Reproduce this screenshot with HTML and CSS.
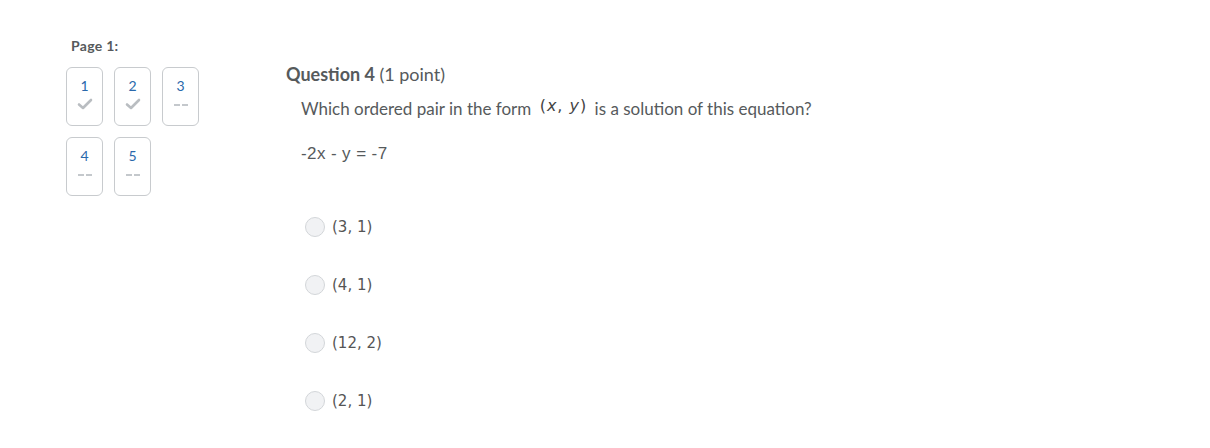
FILE: index.html
```html
<!DOCTYPE html>
<html>
<head>
<meta charset="utf-8">
<link rel="stylesheet" href="styles.css">
</head>
<body>
<div class="page">
  <aside class="nav">
    <div class="nav-title">Page 1:</div>
    <div class="grid">
      <div class="q"><span class="num">1</span><svg class="check" width="16" height="12" viewBox="0 0 16 12"><path d="M2 6.5 L6 10 L14 2" fill="none" stroke="#b9bdc1" stroke-width="2.6" stroke-linecap="round" stroke-linejoin="round"/></svg></div>
      <div class="q"><span class="num">2</span><svg class="check" width="16" height="12" viewBox="0 0 16 12"><path d="M2 6.5 L6 10 L14 2" fill="none" stroke="#b9bdc1" stroke-width="2.6" stroke-linecap="round" stroke-linejoin="round"/></svg></div>
      <div class="q"><span class="num">3</span><span class="dash"><i></i><i></i></span></div>
      <div class="q"><span class="num">4</span><span class="dash"><i></i><i></i></span></div>
      <div class="q"><span class="num">5</span><span class="dash"><i></i><i></i></span></div>
    </div>
  </aside>
  <main class="question">
    <h2 class="qtitle">Question 4 <span class="pts">(1 point)</span></h2>
    <p class="prompt">Which ordered pair in the form <span class="math">(<i>x</i>, <i>y</i>)</span> is a solution of this equation?</p>
    <p class="eq">-2x - y = -7</p>
    <ul class="options">
      <li class="opt"><span class="radio"></span><span class="lbl">(3, 1)</span></li>
      <li class="opt"><span class="radio"></span><span class="lbl">(4, 1)</span></li>
      <li class="opt"><span class="radio"></span><span class="lbl">(12, 2)</span></li>
      <li class="opt"><span class="radio"></span><span class="lbl">(2, 1)</span></li>
    </ul>
  </main>
</div>
</body>
</html>
```

FILE: styles.css
```css
html, body {
  margin: 0;
  padding: 0;
  background: #ffffff;
}
body {
  font-family: Lato, "Open Sans", sans-serif;
  color: #494c4e;
}
.page {
  display: flex;
  padding: 37px 0 0 66px;
}
.nav {
  width: 220px;
  flex: none;
}
.nav-title {
  font-size: 14px;
  font-weight: 700;
  letter-spacing: 0.3px;
  color: #565a5c;
  padding-left: 5px;
  line-height: 18px;
  margin-bottom: 12px;
}
.grid {
  display: grid;
  grid-template-columns: repeat(3, 37px);
  grid-auto-rows: 59px;
  column-gap: 11px;
  row-gap: 11px;
}
.q {
  box-sizing: border-box;
  border: 1px solid #c8cbce;
  border-radius: 6px;
  display: flex;
  flex-direction: column;
  align-items: center;
  padding-top: 10px;
}
.num {
  font-size: 14px;
  line-height: 16px;
  color: #2a68ab;
}
.check {
  margin-top: 4px;
}
.dash {
  margin-top: 10px;
  display: flex;
  gap: 2px;
}
.dash i {
  display: block;
  width: 6px;
  height: 2px;
  background: #c4c8cc;
}
.qtitle {
  margin: 27px 0 0 0;
  font-size: 18px;
  line-height: 20px;
  font-weight: 700;
  color: #565a5c;
}
.pts {
  font-weight: 400;
}
.prompt {
  margin: 15px 0 0 15px;
  font-size: 17px;
  line-height: 20px;
  color: #565a5c;
}
.math {
  font-family: "DejaVu Sans", sans-serif;
  font-size: 16px;
  font-weight: 400;
  letter-spacing: 1px;
  position: relative;
  top: -4px;
  color: #444444;
  margin: 0 3px 0 4px;
}
.math i {
  font-style: italic;
}
.eq {
  margin: 24px 0 0 15px;
  font-family: "Liberation Sans", Arial, sans-serif;
  font-size: 17px;
  letter-spacing: 0.4px;
  line-height: 20px;
  color: #565a5c;
}
.options {
  list-style: none;
  margin: 53px 0 0 19px;
  padding: 0;
  display: flex;
  flex-direction: column;
  gap: 38px;
}
.opt {
  display: flex;
  align-items: center;
  height: 20px;
}
.radio {
  box-sizing: border-box;
  width: 20px;
  height: 20px;
  border-radius: 50%;
  border: 1px solid #d3d6d9;
  background: #f1f2f4;
  margin-right: 7px;
}
.lbl {
  font-family: "DejaVu Sans", Verdana, sans-serif;
  font-size: 15px;
  color: #555555;
}
```
